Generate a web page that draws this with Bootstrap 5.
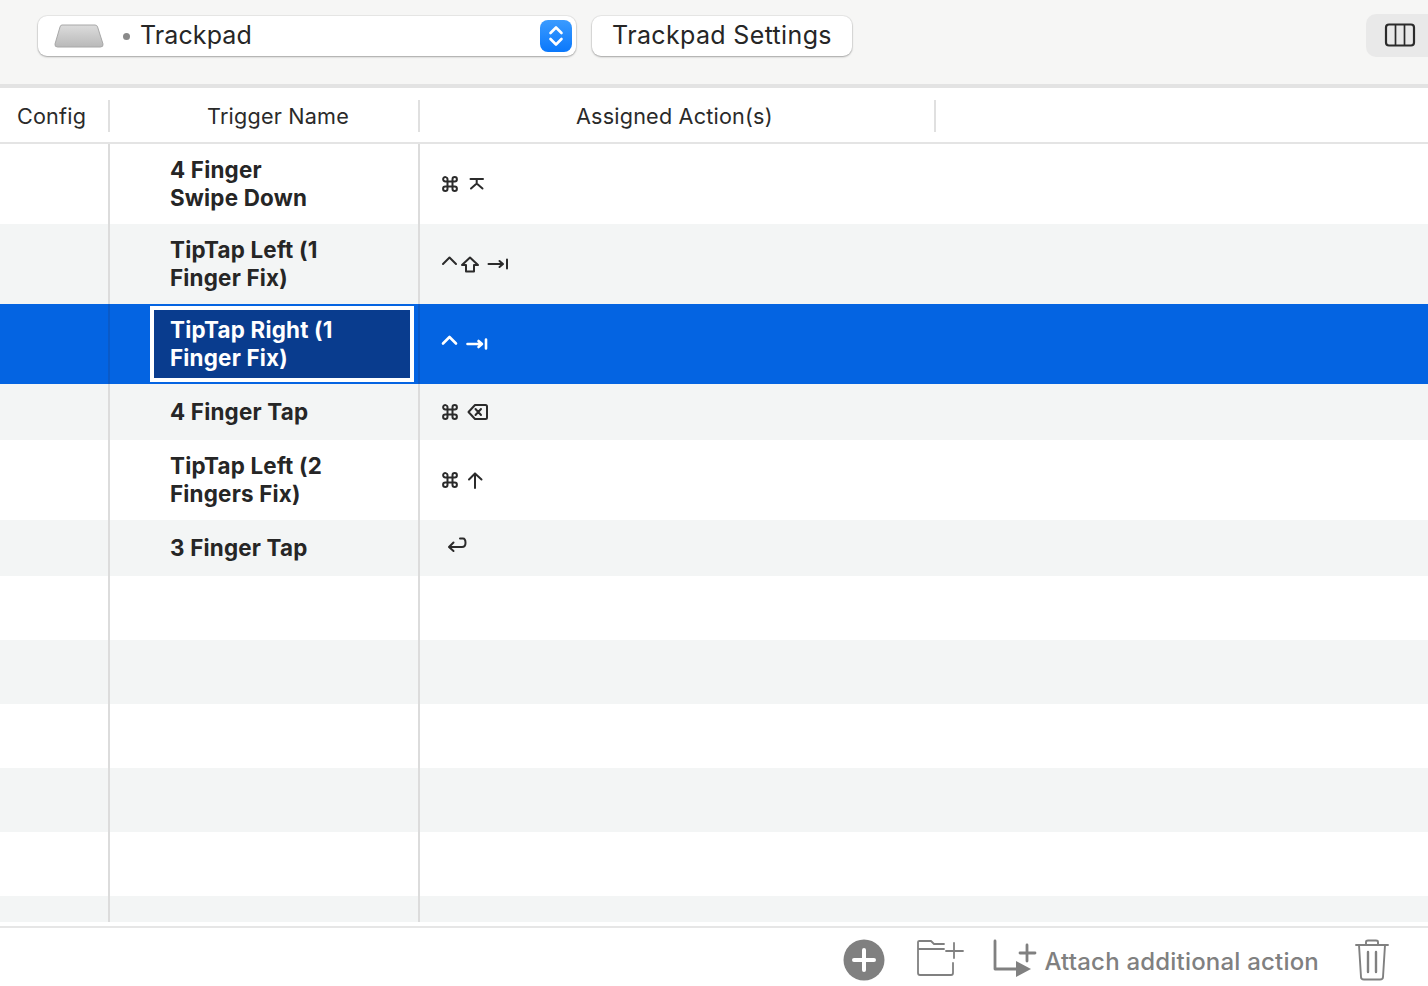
<!DOCTYPE html>
<html lang="en">
<head>
<meta charset="utf-8">
<title>Trackpad triggers</title>
<link href="https://cdn.jsdelivr.net/npm/bootstrap@5.3.0/dist/css/bootstrap.min.css" rel="stylesheet">
<style>
html,body{height:986px;overflow:hidden}
body{font-family:Inter,"Liberation Sans",sans-serif;color:#262626;background:#fff}
.app-shell{height:986px}
.tool-bar{height:88px;background:#f6f6f5;border-bottom:4px solid #e3e3e3;padding-left:38px}
.popup-btn,.plain-btn{height:40px;background:#fff;border-radius:9px;box-shadow:0 1px 2px rgba(0,0,0,.3),0 0 0 1px rgba(0,0,0,.05);font-size:25px;letter-spacing:.1px;color:#262626}
.popup-btn{width:538px;padding-left:16px;padding-right:4px;margin-top:-12px}
.plain-btn{width:260px;margin-left:16px;margin-top:-12px;justify-content:center;letter-spacing:.35px}
.pad-dot{width:7px;height:7px;background:#8a8a8a;border-radius:50%;margin-left:19px;margin-right:10px}
.step-btn{width:32px;height:32px;border-radius:8px;background:linear-gradient(#3a9bff,#0a78fb)}
.col-btn{width:62px;height:43px;background:#e9e9e9;border-radius:10px 0 0 10px;margin-top:-14px;padding-left:18px}
.head-row{height:56px;border-bottom:2px solid #e4e4e4;font-size:21.6px;letter-spacing:.2px;color:#2a2a2a}
.head-row>div{height:32px;margin-top:2px;border-right:2px solid #e0e0e0;white-space:nowrap}
.hd-a{width:110px;padding-left:17px}
.hd-b{width:310px;padding-left:97px}
.hd-c{width:516px;padding-left:156px}
.t-body{height:778px}
.t-row{display:grid;grid-template-columns:110px 310px 1fr}
.t-row>div{border-right:2px solid #dcdcdc}
.t-row>div:last-child{border-right:0}
.h80{height:80px}.h56{height:56px}.h64{height:64px}.h26{height:26px}
.alt-row{background:#f3f5f5}
.name-cell{padding-left:60px;font-size:22.4px;font-weight:700;line-height:28px;color:#262626;letter-spacing:.2px}
.act-cell{padding-left:20px}
.sel-row{background:#0464e2;color:#fff}
.t-row.sel-row>div{border-right-color:#0a5ac8}
.sel-cell{padding-left:40px}
.sel-box{width:264px;height:76px;border:4px solid #fff;background:#093c8e;padding-left:16px;font-size:22.4px;font-weight:700;line-height:28px;letter-spacing:.2px}
.key-strip{display:block;fill:none;stroke:#2b2b2b;stroke-width:2;stroke-linecap:round;stroke-linejoin:round}
.sel-row .key-strip{stroke:#fff;stroke-width:2.6}
.foot-bar{height:60px;margin-top:4px;border-top:2px solid #e6e6e6;padding-right:39px;color:#808080;padding-top:11px}
.foot-ic{display:block;fill:none;stroke:#808080;stroke-linecap:round;stroke-linejoin:round}
.plus-ic{display:block;margin-right:32px}
.arrow-ic{margin-left:27px}
.attach-lbl{font-size:24px;font-weight:500;margin-left:6px;margin-right:36px;margin-top:5px;color:#808080;white-space:nowrap;letter-spacing:.2px}
</style>
</head>
<body>
<svg width="0" height="0" class="position-absolute">
  <defs>
    <g id="k-cmd"><path d="M5.5 5.5H10.5V10.5H5.5Z M5.5 5.5V3.7A2.2 2.2 0 1 0 3.3 5.5H5.5 M10.5 5.5H12.7A2.2 2.2 0 1 0 10.5 3.3V5.5 M10.5 10.5V12.7A2.2 2.2 0 1 0 12.7 10.5H10.5 M5.5 10.5H3.3A2.2 2.2 0 1 0 5.5 12.7V10.5"/></g>
    <path id="k-ctl" d="M1 8 L7.5 1.5 L14 8"/>
    <path id="k-tab" d="M0 5H14 M11 2 L14.500 5 L11 8 M18.500 .5V9.500"/>
  </defs>
</svg>
<div class="app-shell d-flex flex-column">
  <div class="tool-bar d-flex align-items-center">
    <div class="popup-btn d-flex align-items-center">
      <svg width="50" height="24" viewBox="0 0 50 24"><defs><linearGradient id="pad" x1="0" y1="0" x2="0" y2="1"><stop offset="0" stop-color="#dcdcdc"/><stop offset="1" stop-color="#b9b9b9"/></linearGradient></defs><path d="M8 1H41Q43 1 43.6 3L49 20Q49.500 23 46.500 23H3.500Q.5 23 1 20L6 3Q6.500 1 8 1Z" fill="url(#pad)" stroke="#a8a8a8"/></svg>
      <span class="pad-dot"></span>
      <span class="flex-grow-1">Trackpad</span>
      <span class="step-btn d-flex align-items-center justify-content-center">
        <svg width="18" height="26" viewBox="0 0 18 26" fill="none" stroke="#fff" stroke-width="2.600" stroke-linecap="round" stroke-linejoin="round"><path d="M3.500 10L9 4.500L14.500 10M3.500 16L9 21.500L14.500 16"/></svg>
      </span>
    </div>
    <div class="plain-btn d-flex align-items-center">Trackpad Settings</div>
    <div class="col-btn ms-auto d-flex align-items-center">
      <svg width="32" height="24" viewBox="0 0 32 24" fill="none" stroke="#2b2b2b"><rect x="2" y="1.500" width="28" height="21" rx="3" stroke-width="2.200"/><path d="M11.500 1.500V22.500M20.500 1.500V22.500" stroke-width="1.700"/></svg>
    </div>
  </div>

  <div class="head-row d-flex align-items-center">
    <div class="hd-a d-flex align-items-center">Config</div>
    <div class="hd-b d-flex align-items-center">Trigger Name</div>
    <div class="hd-c d-flex align-items-center">Assigned Action(s)</div>
  </div>

  <div class="t-body d-flex flex-column">
    <div class="t-row h80">
      <div></div>
      <div class="name-cell d-flex align-items-center"><span>4 Finger<br>Swipe Down</span></div>
      <div class="act-cell d-flex align-items-center">
        <svg class="key-strip" width="80" height="24" viewBox="0 0 80 24"><use href="#k-cmd" x="2" y="4"/><path d="M30.500 7H43 M31 16.500L36.700 11.500 42.500 16.500 M36.700 7V11.500"/></svg>
      </div>
    </div>
    <div class="t-row h80 alt-row">
      <div></div>
      <div class="name-cell d-flex align-items-center"><span>TipTap Left (1<br>Finger Fix)</span></div>
      <div class="act-cell d-flex align-items-center">
        <svg class="key-strip" width="80" height="24" viewBox="0 0 80 24"><use href="#k-ctl" x="2" y="4"/><path d="M30 5.500L38 13H34V19.500H26V13H22Z"/><use href="#k-tab" x="48.500" y="7"/></svg>
      </div>
    </div>
    <div class="t-row h80 sel-row">
      <div></div>
      <div class="sel-cell d-flex align-items-center">
        <div class="sel-box d-flex align-items-center"><span>TipTap Right (1<br>Finger Fix)</span></div>
      </div>
      <div class="act-cell d-flex align-items-center">
        <svg class="key-strip" width="80" height="24" viewBox="0 0 80 24"><use href="#k-ctl" x="2" y="3.500"/><use href="#k-tab" x="27.500" y="7"/></svg>
      </div>
    </div>
    <div class="t-row h56 alt-row">
      <div></div>
      <div class="name-cell d-flex align-items-center"><span>4 Finger Tap</span></div>
      <div class="act-cell d-flex align-items-center">
        <svg class="key-strip" width="80" height="24" viewBox="0 0 80 24"><use href="#k-cmd" x="2" y="4"/><path d="M35 5H45.500Q47 5 47 6.500V17.500Q47 19 45.500 19H35L28.500 12Z M35.500 9L41 15 M41 9L35.500 15"/></svg>
      </div>
    </div>
    <div class="t-row h80">
      <div></div>
      <div class="name-cell d-flex align-items-center"><span>TipTap Left (2<br>Fingers Fix)</span></div>
      <div class="act-cell d-flex align-items-center">
        <svg class="key-strip" width="80" height="24" viewBox="0 0 80 24"><use href="#k-cmd" x="2" y="4"/><path d="M35 20V5.500 M29 11.500L35 5.500 41.500 11.500"/></svg>
      </div>
    </div>
    <div class="t-row h56 alt-row">
      <div></div>
      <div class="name-cell d-flex align-items-center"><span>3 Finger Tap</span></div>
      <div class="act-cell d-flex align-items-center">
        <svg class="key-strip" width="80" height="24" viewBox="0 0 80 24"><path d="M20 2.500H23Q25.500 2.500 25.500 7Q25.500 11 22 11H9.500 M13.500 6.500L9 11 13.500 15"/></svg>
      </div>
    </div>
    <div class="t-row h64"><div></div><div></div><div></div></div>
    <div class="t-row h64 alt-row"><div></div><div></div><div></div></div>
    <div class="t-row h64"><div></div><div></div><div></div></div>
    <div class="t-row h64 alt-row"><div></div><div></div><div></div></div>
    <div class="t-row h64"><div></div><div></div><div></div></div>
    <div class="t-row h26 alt-row"><div></div><div></div><div></div></div>
  </div>

  <div class="foot-bar d-flex align-items-start justify-content-end">
    <svg class="plus-ic" width="42" height="42" viewBox="0 0 42 42"><circle cx="21" cy="21" r="20.500" fill="#808080"/><path d="M21 11V31M11 21H31" stroke="#fff" stroke-width="4" stroke-linecap="round"/></svg>
    <svg class="foot-ic" width="48" height="38" viewBox="0 0 48 38" stroke-width="1.800"><path d="M36 24V34Q36 36 34 36H3Q1 36 1 34V3Q1 2 2.500 2H14L17 5H27 M1 10H27 M37 4V19 M29 12H46"/></svg>
    <svg class="foot-ic arrow-ic" width="46" height="40" viewBox="0 0 46 40"><path d="M3 2V30H25" stroke-width="2.800"/><path d="M24 22L39 30 24 38Z" fill="#808080" stroke="none"/><path d="M35 6V22M28 14H43" stroke-width="2.800"/></svg>
    <span class="attach-lbl">Attach additional action</span>
    <svg class="foot-ic" width="34" height="42" viewBox="0 0 34 42" stroke-width="1.900"><path d="M1 6H33 M11 6V3Q11 1.500 13 1.500H21Q23 1.500 23 3V6 M4 6L6 38Q6 40.500 9 40.500H25Q28 40.500 28 38L30 6"/><path d="M13 13V33M21 13V33" stroke-width="2.400"/></svg>
  </div>
</div>
</body>
</html>
